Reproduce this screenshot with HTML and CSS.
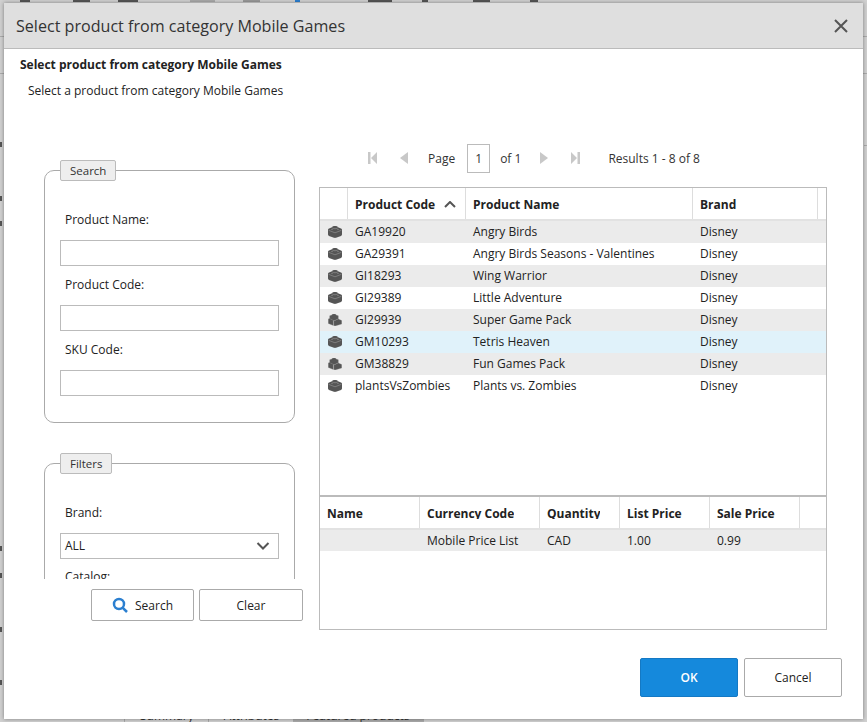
FILE: index.html
```html
<!DOCTYPE html>
<html lang="en">
<head>
  <meta charset="UTF-8" />
  <title>Select product</title>
  <link rel="stylesheet" href="styles.css">
</head>
<body>
  <svg width="0" height="0" class="defs">
    <symbol id="brick" viewBox="0 0 14 12">
      <path fill="#555" d="M7 0c1.900 0 3 .6 3 1.300l3 1.100c.7.300 1 .8 1 1.300v4.800c0 .7-.4 1.100-1 1.400l-5 1.900c-.6.200-1.400.2-2 0l-5-1.900c-.6-.3-1-.7-1-1.400V3.700c0-.5.3-1 1-1.300l3-1.100C4 .6 5.100 0 7 0z" />
      <path fill="none" stroke="#999" stroke-width=".6" d="M.6 4.300 7 6.800l6.400-2.500M4 1.500c0 .7 1.300 1.200 3 1.200s3-.5 3-1.200" />
      <path fill="#888" d="M3 3.600c0-.3.500-.5 1-.5s1 .2 1 .5-.5.5-1 .5-1-.2-1-.5zm6 0c0-.3.500-.5 1-.5s1 .2 1 .5-.5.5-1 .5-1-.2-1-.5z" />
    </symbol>
    <symbol id="bricks" viewBox="0 0 14 12">
      <g fill="#555" stroke="#888" stroke-width=".3">
        <path d="M6 0c1.300 0 2.100.4 2.100.9l2.200.9v3.100L6 6.800 1.700 4.900V1.800l2.200-.9C3.900.4 4.700 0 6 0z" />
        <path d="M1.300 4.400 5.300 6.300v5.200L.3 9.400V5z" />
        <path d="M5.800 6.900 10.400 4.900l3.300 1.700v3.400L7 12 5.800 11.500z" />
      </g>
    </symbol>
  </svg>

  <div class="page">
    <div class="page-tabs">
      <span class="page-tab">Summary</span>
      <span class="page-tab">Attributes</span>
      <span class="page-tab page-tab-on">Featured products</span>
    </div>
  </div>

  <div class="modal">
    <div class="modal-head">
      <span class="modal-title">Select product from category Mobile Games</span>
      <svg class="close" width="16" height="16" viewBox="0 0 16 16"><path d="M2 2l12 12M14 2 2 14" /></svg>
    </div>

    <div class="modal-body">
      <div class="intro-title">Select product from category Mobile Games</div>
      <div class="intro-text">Select a product from category Mobile Games</div>

      <div class="columns">
        <div class="left">
          <div class="left-scroll">
            <fieldset class="group group-search">
              <legend>Search</legend>
              <label>Product Name:</label>
              <input type="text" />
              <label>Product Code:</label>
              <input type="text" />
              <label>SKU Code:</label>
              <input type="text" />
            </fieldset>
            <fieldset class="group group-filters">
              <legend>Filters</legend>
              <label>Brand:</label>
              <div class="select">ALL
                <svg width="14" height="8" viewBox="0 0 14 8"><path d="M1.500 1 7 6.500 12.500 1" /></svg>
              </div>
              <label>Catalog:</label>
            </fieldset>
          </div>
          <div class="left-actions">
            <button class="btn btn-search">
              <svg width="17" height="17" viewBox="0 0 17 17"><circle cx="7" cy="7" r="5" /><path d="M10.800 10.800 15 15" /></svg>
              Search
            </button>
            <button class="btn btn-clear">Clear</button>
          </div>
        </div>

        <div class="right">
          <div class="pager">
            <svg class="pg pg-first" width="10" height="14" viewBox="0 0 10 14"><path d="M0 1h2.500v12H0zM9 1v12L3 7z" /></svg>
            <svg class="pg pg-prev" width="8" height="14" viewBox="0 0 8 14"><path d="M8 1v12L0 7z" /></svg>
            <span class="pg-page">Page</span>
            <span class="pg-box">1</span>
            <span class="pg-of">of 1</span>
            <svg class="pg pg-next" width="8" height="14" viewBox="0 0 8 14"><path d="M0 1v12l8-6z" /></svg>
            <svg class="pg pg-last" width="10" height="14" viewBox="0 0 10 14"><path d="M10 1H7.500v12H10zM1 1v12l6-6z" /></svg>
            <span class="pg-results">Results 1 - 8 of 8</span>
          </div>

          <div class="grids">
            <div class="grid-top">
              <div class="row-head products">
                <div class="cell"></div>
                <div class="cell">Product Code
                  <svg class="sort" width="12" height="7" viewBox="0 0 12 7"><path d="M1 6l5-5 5 5" /></svg>
                </div>
                <div class="cell">Product Name</div>
                <div class="cell">Brand</div>
                <div class="cell"></div>
              </div>
              <div class="row products odd"><svg class="ico"><use href="#brick" /></svg><span>GA19920</span><span>Angry Birds</span><span>Disney</span></div>
              <div class="row products"><svg class="ico"><use href="#brick" /></svg><span>GA29391</span><span>Angry Birds Seasons - Valentines</span><span>Disney</span></div>
              <div class="row products odd"><svg class="ico"><use href="#brick" /></svg><span>GI18293</span><span>Wing Warrior</span><span>Disney</span></div>
              <div class="row products"><svg class="ico"><use href="#brick" /></svg><span>GI29389</span><span>Little Adventure</span><span>Disney</span></div>
              <div class="row products odd"><svg class="ico"><use href="#bricks" /></svg><span>GI29939</span><span>Super Game Pack</span><span>Disney</span></div>
              <div class="row products selected"><svg class="ico"><use href="#brick" /></svg><span>GM10293</span><span>Tetris Heaven</span><span>Disney</span></div>
              <div class="row products odd"><svg class="ico"><use href="#bricks" /></svg><span>GM38829</span><span>Fun Games Pack</span><span>Disney</span></div>
              <div class="row products"><svg class="ico"><use href="#brick" /></svg><span>plantsVsZombies</span><span>Plants vs. Zombies</span><span>Disney</span></div>
            </div>
            <div class="grid-bottom">
              <div class="row-head prices">
                <div class="cell"><span class="clip">Name</span></div>
                <div class="cell"><span class="clip">Currency Code</span></div>
                <div class="cell"><span class="clip">Quantity</span></div>
                <div class="cell"><span class="clip">List Price</span></div>
                <div class="cell"><span class="clip">Sale Price</span></div>
                <div class="cell"></div>
              </div>
              <div class="row prices odd"><span></span><span>Mobile Price List</span><span>CAD</span><span>1.00</span><span>0.99</span></div>
            </div>
          </div>
        </div>
      </div>
    </div>

    <div class="modal-foot">
      <button class="btn btn-ok">OK</button>
      <button class="btn btn-cancel">Cancel</button>
    </div>
  </div>
</body>
</html>
```

FILE: styles.css
```css
* {
  box-sizing: border-box;
}
html, body {
  height: 722px;
}
body {
  margin: 0;
  background: #d0d0d0;
  font-family: "Open Sans", "Liberation Sans", sans-serif;
  font-size: 12px;
  color: #222;
  overflow: hidden;
}
.defs {
  position: absolute;
}

/* the page behind the dialog, only its edges show */
.page {
  position: absolute;
  top: 0;
  left: 0;
  width: 867px;
  height: 722px;
  overflow: hidden;
  background:
    linear-gradient(#555, #555) 20px 0 / 10px 2px no-repeat,
    linear-gradient(#555, #555) 73px 0 / 17px 2px no-repeat,
    linear-gradient(#555, #555) 118px 0 / 20px 2px no-repeat,
    linear-gradient(#aaa, #aaa) 190px 0 / 25px 2px no-repeat,
    linear-gradient(#999, #999) 243px 0 / 17px 2px no-repeat,
    linear-gradient(#2b7fd0, #2b7fd0) 295px 0 / 5px 2px no-repeat,
    linear-gradient(#555, #555) 368px 0 / 24px 2px no-repeat,
    linear-gradient(#555, #555) 422px 0 / 6px 2px no-repeat,
    linear-gradient(#555, #555) 473px 0 / 17px 2px no-repeat,
    linear-gradient(#555, #555) 530px 0 / 8px 2px no-repeat,
    linear-gradient(#aaa, #aaa) 0 36px / 867px 1px no-repeat,
    linear-gradient(#aaa, #aaa) 0 73px / 867px 1px no-repeat,
    linear-gradient(#aaa, #aaa) 864px 145px / 3px 1px no-repeat,
    linear-gradient(#555, #555) 0 142px / 2px 5px no-repeat,
    linear-gradient(#555, #555) 0 196px / 2px 5px no-repeat,
    linear-gradient(#555, #555) 0 221px / 2px 5px no-repeat,
    linear-gradient(#555, #555) 0 546px / 2px 5px no-repeat,
    linear-gradient(#555, #555) 0 573px / 2px 5px no-repeat,
    linear-gradient(#555, #555) 0 627px / 2px 5px no-repeat,
    linear-gradient(#555, #555) 0 680px / 2px 5px no-repeat;
}
.page-tabs {
  position: absolute;
  top: 707px;
  left: 124px;
  display: flex;
  border-left: 1px solid #aaa;
}
.page-tab {
  height: 20px;
  line-height: 18px;
  padding: 0 14px 0 15px;
  border-right: 1px solid #aaa;
  color: #333;
}
.page-tab-on {
  padding: 0 13px 0 12px;
  background: #aaa;
}

.modal {
  position: relative;
  width: 859px;
  height: 716px;
  margin: 3px 0 0 4px;
  background: #fff;
  display: flex;
  flex-direction: column;
  box-shadow: 0 0 4px rgba(0, 0, 0, 0.4);
}
.modal-head {
  height: 46px;
  flex: none;
  background: #dfdfdf;
  border-bottom: 1px solid #bbb;
  display: flex;
  align-items: center;
  justify-content: space-between;
  padding: 0 14px 0 12px;
}
.modal-title {
  font-size: 16.100px;
  color: #333;
}
.close path {
  stroke: #555;
  stroke-width: 2;
  fill: none;
}
.modal-body {
  flex: 1;
  padding-left: 16px;
}
.intro-title {
  font-weight: bold;
  line-height: 16px;
  margin-top: 8px;
}
.intro-text {
  line-height: 16px;
  margin: 10px 0 0 8px;
}
.columns {
  display: flex;
  margin-top: 43px;
}
.left {
  width: 299px;
  flex: none;
}
.left-scroll {
  height: 419px;
  margin-top: 18px;
  padding-left: 24px;
  overflow: hidden;
}
.group {
  width: 251px;
  margin: 0;
  padding: 0 15px;
  border: 1px solid #aaa;
  border-radius: 10px;
}
.group-search {
  height: 263px;
}
.group-filters {
  height: 200px;
  margin-top: 30px;
}
.group legend {
  height: 21px;
  padding: 0 9px;
  margin-left: 0;
  background: #eee;
  border: 1px solid #bbb;
  border-radius: 2px;
  font-size: 11.500px;
  line-height: 19px;
  color: #333;
}
.group label {
  display: block;
  line-height: 16px;
  padding-left: 5px;
  margin: 31px 0 12px;
}
.group label ~ label {
  margin-top: 11px;
}
.group-filters label ~ label {
  margin-top: 10px;
}
.group-search input {
  display: block;
  width: 219px;
  height: 26px;
  border: 1px solid #bbb;
  background: #fff;
  padding: 0 4px;
}
.select {
  width: 219px;
  height: 26px;
  border: 1px solid #bbb;
  display: flex;
  align-items: center;
  justify-content: space-between;
  padding: 0 8px 2px 4px;
}
.select svg {
  margin-top: 2px;
}
.select path {
  stroke: #555;
  stroke-width: 2;
  fill: none;
}
.left-actions {
  display: flex;
  gap: 5px;
  margin-top: 10px;
  padding-left: 71px;
}
.btn {
  height: 32px;
  background: #fff;
  border: 1px solid #aaa;
  border-radius: 2px;
  font-family: inherit;
  font-size: 12px;
  color: #222;
  display: flex;
  align-items: center;
  justify-content: center;
  padding: 0;
}
.btn-search {
  width: 103px;
  gap: 6px;
}
.btn-search circle, .btn-search path {
  stroke: #2b7fd0;
  fill: none;
  stroke-width: 2.500;
}
.btn-clear {
  width: 104px;
}
.right {
  width: 508px;
  flex: none;
}
.pager {
  height: 32px;
  display: flex;
  align-items: center;
  color: #333;
}
.pg {
  fill: #c8c8c8;
  flex: none;
}
.pg-first {
  margin-left: 49px;
}
.pg-prev {
  margin-left: 22px;
}
.pg-page {
  margin-left: 20px;
}
.pg-box {
  width: 23px;
  height: 29px;
  margin-left: 12px;
  border: 1px solid #bbb;
  display: flex;
  align-items: center;
  justify-content: center;
}
.pg-of {
  margin-left: 10px;
}
.pg-next {
  margin-left: 19px;
}
.pg-last {
  margin-left: 22px;
}
.pg-results {
  margin-left: 28px;
}
.grids {
  height: 443px;
  margin-top: 13px;
  border: 1px solid #bbb;
  display: flex;
  flex-direction: column;
}
.grid-top {
  height: 309px;
  flex: none;
  border-bottom: 2px solid #bbb;
}
.row-head {
  display: grid;
  height: 33px;
  border-bottom: 2px solid #e2e2e2;
  font-weight: bold;
}
.row-head .cell {
  display: flex;
  align-items: center;
  gap: 9px;
  padding-left: 7px;
  border-right: 1px solid #ddd;
}
.products .cell {
  padding-top: 2px;
}
.prices .cell {
  padding-bottom: 2px;
}
.row-head .cell:last-child {
  border-right: 0;
}
.row {
  display: grid;
  height: 22px;
  padding-bottom: 2px;
  align-items: center;
}
.row.prices {
  height: 21px;
  padding-bottom: 1px;
}
.row span {
  padding-left: 7px;
  white-space: nowrap;
}
.products {
  grid-template-columns: 28px 118px 227px 125px 1fr;
}
.prices {
  grid-template-columns: 100px 120px 80px 90px 90px 1fr;
}
.odd {
  background: #ebebeb;
}
.selected {
  background: #e0f2fa;
}
.ico {
  width: 14px;
  height: 12px;
  margin: 2px 0 0 8px;
}
.sort path {
  stroke: #555;
  stroke-width: 2;
  fill: none;
}
.clip {
  display: block;
  height: 13px;
  line-height: 16px;
  overflow: hidden;
  margin-top: 1px;
}
.modal-foot {
  height: 61px;
  flex: none;
  display: flex;
  justify-content: flex-end;
  gap: 6px;
  padding-right: 21px;
}
.btn-ok, .btn-cancel {
  width: 98px;
  height: 39px;
}
.btn-ok {
  background: #1589dc;
  border-color: #1479c4;
  color: #fff;
  font-weight: 600;
}
```
